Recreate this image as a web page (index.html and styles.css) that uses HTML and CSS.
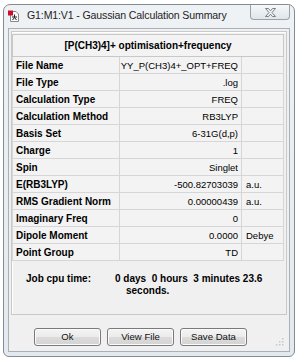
FILE: index.html
```html
<!DOCTYPE html>
<html>
<head>
<meta charset="utf-8">
<link rel="stylesheet" href="styles.css">
</head>
<body>
<div class="window">
  <div class="titlebar">
    <svg class="appicon" width="11" height="12" viewBox="0 0 11 12">
      <path d="M2.5 1.5 H8 L10.5 4 V11.5 H2.5 Z" fill="#fafafa" stroke="#8a8a8a" stroke-width="1"/>
      <rect x="0" y="0.5" width="5" height="5" fill="#c8102e"/>
      <path d="M6.5 4.5 V7.5 M6.5 7.5 L4.5 10 M6.5 7.5 L8.5 10 M4 7 H9" stroke="#222" stroke-width="1" fill="none"/>
    </svg>
    <span class="title">G1:M1:V1 - Gaussian Calculation Summary</span>
    <div class="close">
      <svg width="11" height="9" viewBox="0 0 11 9">
        <polygon points="0.5,0.5 3.5,0.5 5.5,2.8 7.5,0.5 10.5,0.5 7,4.5 10.5,8.5 7.5,8.5 5.5,6.2 3.5,8.5 0.5,8.5 4,4.5" fill="#eef1f4" stroke="#6d747b" stroke-width="0.9" stroke-linejoin="round"/>
      </svg>
    </div>
  </div>
  <div class="client">
    <div class="group">
      <table class="summary">
        <colgroup><col class="c1"><col class="c2"><col class="c3"></colgroup>
        <tr class="head"><th colspan="3">[P(CH3)4]+ optimisation+frequency</th></tr>
        <tr><td class="lbl">File Name</td><td class="val">YY_P(CH3)4+_OPT+FREQ</td><td class="unit"></td></tr>
        <tr><td class="lbl">File Type</td><td class="val">.log</td><td class="unit"></td></tr>
        <tr><td class="lbl">Calculation Type</td><td class="val">FREQ</td><td class="unit"></td></tr>
        <tr><td class="lbl">Calculation Method</td><td class="val">RB3LYP</td><td class="unit"></td></tr>
        <tr><td class="lbl">Basis Set</td><td class="val">6-31G(d,p)</td><td class="unit"></td></tr>
        <tr><td class="lbl">Charge</td><td class="val">1</td><td class="unit"></td></tr>
        <tr><td class="lbl">Spin</td><td class="val">Singlet</td><td class="unit"></td></tr>
        <tr><td class="lbl">E(RB3LYP)</td><td class="val">-500.82703039</td><td class="unit">a.u.</td></tr>
        <tr><td class="lbl">RMS Gradient Norm</td><td class="val">0.00000439</td><td class="unit">a.u.</td></tr>
        <tr><td class="lbl">Imaginary Freq</td><td class="val">0</td><td class="unit"></td></tr>
        <tr><td class="lbl">Dipole Moment</td><td class="val">0.0000</td><td class="unit">Debye</td></tr>
        <tr><td class="lbl">Point Group</td><td class="val">TD</td><td class="unit"></td></tr>
      </table>
      <div class="cpu">
        <span class="cpu-label">Job cpu time:</span>
        <div class="cpu-value">
          <div class="l1">0 days  0 hours  3 minutes 23.6</div>
          <div class="l2">seconds.</div>
        </div>
      </div>
    </div>
    <div class="buttons">
      <button class="btn">Ok</button>
      <button class="btn">View File</button>
      <button class="btn">Save Data</button>
    </div>
    <svg class="grip" width="10" height="10" viewBox="0 0 10 10">
      <g fill="#c4c8cc">
        <rect x="8" y="2" width="1.5" height="1.5"/>
        <rect x="5" y="5" width="1.5" height="1.5"/>
        <rect x="8" y="5" width="1.5" height="1.5"/>
        <rect x="2" y="8" width="1.5" height="1.5"/>
        <rect x="5" y="8" width="1.5" height="1.5"/>
        <rect x="8" y="8" width="1.5" height="1.5"/>
      </g>
    </svg>
  </div>
</div>
</body>
</html>
```
FILE: styles.css
```css
html, body {
  margin: 0;
  padding: 0;
  background: #ffffff;
}
body {
  width: 300px;
  height: 360px;
  overflow: hidden;
  font-family: "Liberation Sans", Arial, sans-serif;
}
.window {
  margin: 4px 0 0 3px;
  width: 292px;
  height: 353px;
  box-sizing: border-box;
  border: 1px solid #838b93;
  border-radius: 7px 7px 6px 6px;
  background: linear-gradient(#eef2f5, #e3e9ee);
  display: flex;
  flex-direction: column;
  position: relative;
}
.titlebar {
  height: 23px;
  display: flex;
  align-items: flex-start;
  flex: none;
}
.appicon {
  margin: 5px 0 0 4px;
  flex: none;
}
.title {
  margin: 4px 0 0 8px;
  font-size: 10.6px;
  line-height: 13px;
  letter-spacing: -0.15px;
  color: #1e1e1e;
  white-space: nowrap;
}
.close {
  margin-left: auto;
  margin-right: 4px;
  width: 40px;
  height: 15px;
  box-sizing: border-box;
  border: 1px solid #9ba2a9;
  border-top: none;
  border-radius: 0 0 4px 4px;
  background: linear-gradient(#f6f8fa, #dfe5ea);
  display: flex;
  align-items: center;
  justify-content: center;
  flex: none;
}
.client {
  margin: 0 4px;
  height: 324px;
  box-sizing: border-box;
  border: 1px solid #a9b0b7;
  background: #f0f0f0;
  position: relative;
  flex: none;
}
.group {
  margin: 2px 2px 0 2px;
  height: 284px;
  box-sizing: border-box;
  border: 1px solid #c9c9c9;
  box-shadow: inset 1px 1px 0 #ffffff;
  padding: 2px 2px 0 0;
}
.summary {
  border-collapse: collapse;
  table-layout: fixed;
  width: 271px;
  font-size: 9.5px;
  color: #000;
}
.c1 { width: 107px; }
.c2 { width: 122px; }
.c3 { width: 42px; }
.summary th, .summary td {
  border: 1px solid #d6d6d6;
  padding: 0;
  white-space: nowrap;
  overflow: hidden;
}
.summary tr { height: 17px; }
.summary tr.head { height: 22px; }
.summary th {
  font-size: 10px;
  font-weight: bold;
  text-align: center;
  border-color: #c8c8c8;
  background: #f3f3f3;
}
.lbl {
  font-weight: bold;
  font-size: 10px;
  padding-left: 3px !important;
  background: #f3f3f3;
}
.val {
  text-align: right;
  padding-right: 3px !important;
  background: #f3f3f3;
}
.unit {
  padding-left: 4px !important;
  background: #f3f3f3;
}
.cpu {
  display: flex;
  margin-top: 12px;
  font-size: 10px;
  font-weight: bold;
  line-height: 12px;
}
.cpu-label {
  margin-left: 14px;
  width: 89px;
  flex: none;
}
.cpu-value .l1 {
  white-space: pre;
}
.cpu-value .l2 {
  padding-left: 11px;
}
.buttons {
  display: flex;
  gap: 6px;
  margin: 13px 0 0 25px;
}
.btn {
  width: 67px;
  height: 18px;
  box-sizing: border-box;
  border: 1px solid #7a7a7a;
  border-radius: 3px;
  background: linear-gradient(#f4f4f4 0%, #ebebeb 50%, #dcdcdc 51%, #d3d3d3 100%);
  box-shadow: inset 0 0 0 1px #fbfbfb;
  font-family: "Liberation Sans", Arial, sans-serif;
  font-size: 9.6px;
  color: #111;
  padding: 0;
  line-height: 16px;
}
.grip {
  position: absolute;
  right: 5px;
  bottom: 5px;
}
```
